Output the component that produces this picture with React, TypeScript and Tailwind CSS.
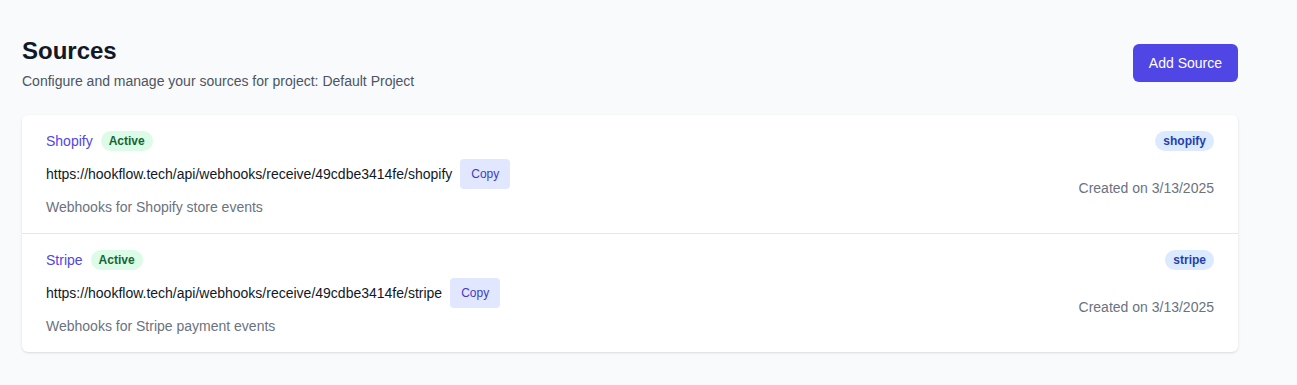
import React from "react";

// ─── Types ────────────────────────────────────────────────────────────────────

interface Source {
  name: string;
  slug: string;
  url: string;
  description: string;
  created: string;
}

const sources: Source[] = [
  {
    name: "Shopify",
    slug: "shopify",
    url: "https://hookflow.tech/api/webhooks/receive/49cdbe3414fe/shopify",
    description: "Webhooks for Shopify store events",
    created: "3/13/2025",
  },
  {
    name: "Stripe",
    slug: "stripe",
    url: "https://hookflow.tech/api/webhooks/receive/49cdbe3414fe/stripe",
    description: "Webhooks for Stripe payment events",
    created: "3/13/2025",
  },
];

// ─── Row ──────────────────────────────────────────────────────────────────────

function SourceRow({ source }: { source: Source }) {
  return (
    <div className="flex justify-between px-6 py-4">
      <div className="flex flex-col">
        <div className="flex items-center">
          <span className="text-sm text-[#4f46e5]">{source.name}</span>
          <span className="ml-2 rounded-full bg-[#dcfce7] px-2 py-0.5 text-xs font-semibold text-[#166534]">
            Active
          </span>
        </div>
        <div className="mt-2 flex items-center">
          <span className="text-sm text-[#111827]">{source.url}</span>
          <button className="ml-2 rounded bg-[#e0e7ff] px-[11px] py-[7px] text-xs text-[#4338ca]">
            Copy
          </button>
        </div>
        <p className="mt-2 text-sm text-[#6b7280]">{source.description}</p>
      </div>
      <div className="flex flex-col items-end">
        <span className="rounded-full bg-[#dbeafe] px-2 py-0.5 text-xs font-semibold text-[#1e40af]">
          {source.slug}
        </span>
        <span className="mt-[27px] text-sm text-[#6b7280]">Created on {source.created}</span>
      </div>
    </div>
  );
}

// ─── Page ─────────────────────────────────────────────────────────────────────

export default function App() {
  return (
    <div className="min-h-screen bg-[#f9fafb] px-[22px] pt-[35px] pb-8 font-['Liberation_Sans',Arial,sans-serif]">
      <div className="w-[1216px]">
        <div className="flex items-center justify-between">
          <div>
            <h1 className="text-2xl font-bold text-[#111827]">Sources</h1>
            <p className="mt-1 text-sm text-[#4b5563]">
              Configure and manage your sources for project: Default Project
            </p>
          </div>
          <button className="rounded-md bg-[#4f46e5] px-4 py-[9px] text-sm text-white">
            Add Source
          </button>
        </div>

        <div className="mt-6 divide-y divide-[#e5e7eb] rounded-md bg-white shadow-sm">
          {sources.map((s) => (
            <SourceRow key={s.slug} source={s} />
          ))}
        </div>
      </div>
    </div>
  );
}
